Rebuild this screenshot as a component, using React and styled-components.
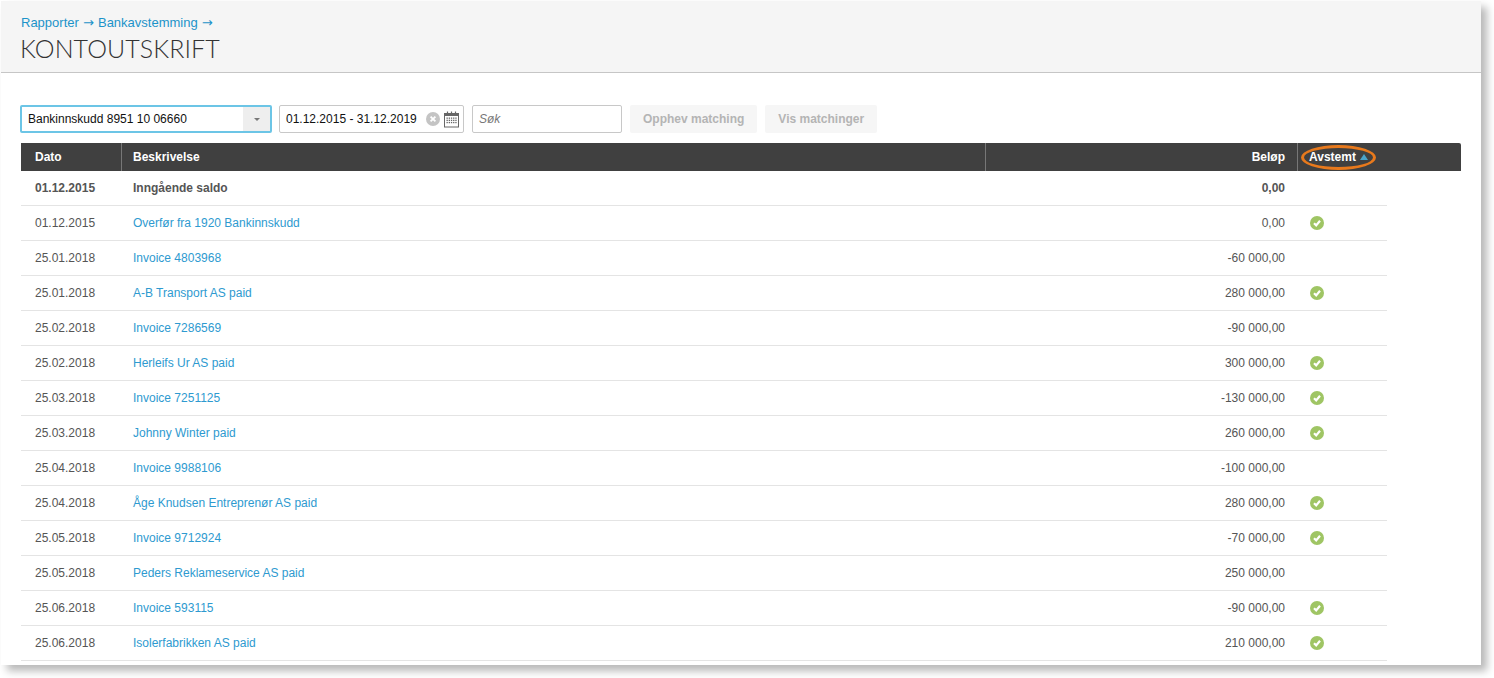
import React from 'react'
import styled, { createGlobalStyle } from 'styled-components'

const Global = createGlobalStyle`
  html, body { margin: 0; padding: 0; background: #fff; }
  body { font-family: "Liberation Sans", Arial, sans-serif; font-size: 12px; color: #555; }
`

const rows = [
  ['01.12.2015', 'Overfør fra 1920 Bankinnskudd', '0,00', true],
  ['25.01.2018', 'Invoice 4803968', '-60 000,00', false],
  ['25.01.2018', 'A-B Transport AS paid', '280 000,00', true],
  ['25.02.2018', 'Invoice 7286569', '-90 000,00', false],
  ['25.02.2018', 'Herleifs Ur AS paid', '300 000,00', true],
  ['25.03.2018', 'Invoice 7251125', '-130 000,00', true],
  ['25.03.2018', 'Johnny Winter paid', '260 000,00', true],
  ['25.04.2018', 'Invoice 9988106', '-100 000,00', false],
  ['25.04.2018', 'Åge Knudsen Entreprenør AS paid', '280 000,00', true],
  ['25.05.2018', 'Invoice 9712924', '-70 000,00', true],
  ['25.05.2018', 'Peders Reklameservice AS paid', '250 000,00', false],
  ['25.06.2018', 'Invoice 593115', '-90 000,00', true],
  ['25.06.2018', 'Isolerfabrikken AS paid', '210 000,00', true],
]

export default function App() {
  return (
    <Stage>
      <Global />
      <Frame>
        <Header>
          <Crumbs>
            <a>Rapporter</a> <Arrow>→</Arrow> <a>Bankavstemming</a> <Arrow>→</Arrow>
          </Crumbs>
          <Title>Kontoutskrift</Title>
        </Header>
        <Content>
          <Toolbar>
            <Select>
              <span>Bankinnskudd 8951 10 06660</span>
              <Caret><i /></Caret>
            </Select>
            <DateField>
              <span>01.12.2015 - 31.12.2019</span>
              <ClearIcon />
              <CalendarIcon />
            </DateField>
            <Search>Søk</Search>
            <Button>Opphev matching</Button>
            <Button>Vis matchinger</Button>
          </Toolbar>
          <HeadRow>
            <HeadCell>Dato</HeadCell>
            <HeadCell>Beskrivelse</HeadCell>
            <HeadCell $right>Beløp</HeadCell>
            <HeadCell>
              Avstemt <SortUp />
              <Ring />
            </HeadCell>
          </HeadRow>
          <Rows>
            <Row>
              <Strong>01.12.2015</Strong>
              <Strong>Inngående saldo</Strong>
              <Amount $bold>0,00</Amount>
              <span />
            </Row>
            {rows.map(([date, text, amount, ok], i) => (
              <Row key={i}>
                <span>{date}</span>
                <Link>{text}</Link>
                <Amount>{amount}</Amount>
                <span>{ok && <Check />}</span>
              </Row>
            ))}
          </Rows>
        </Content>
      </Frame>
    </Stage>
  )
}

function ClearIcon() {
  return (
    <svg width="14" height="14" viewBox="0 0 14 14">
      <circle cx="7" cy="7" r="7" fill="#c4c4c4" />
      <path d="M4.6 4.6l4.8 4.8M9.4 4.6l-4.8 4.8" stroke="#fff" strokeWidth="1.8" />
    </svg>
  )
}

function CalendarIcon() {
  const cells = []
  for (let y = 0; y < 3; y++) {
    for (let x = 0; x < 5; x++) {
      cells.push(<rect key={x + '-' + y} x={2.5 + x * 2.2} y={6.5 + y * 2.2} width="1.3" height="1.3" fill="#666" />)
    }
  }
  return (
    <svg width="16" height="17" viewBox="0 0 16 17">
      <rect x="0.5" y="2.5" width="14" height="13.5" fill="#fff" stroke="#666" />
      <rect x="0.5" y="2.5" width="14" height="2.5" fill="#666" />
      <path d="M3.5 0.5v3M7.5 0.5v3M11.5 0.5v3" stroke="#666" strokeWidth="1.2" />
      {cells}
    </svg>
  )
}

function Check() {
  return (
    <svg width="14" height="14" viewBox="0 0 14 14" style={{ display: 'block' }}>
      <circle cx="7" cy="7" r="7" fill="#9fc564" />
      <path d="M4 7.2l2.2 2.2 3.8-4.6" fill="none" stroke="#fff" strokeWidth="2.2" />
    </svg>
  )
}

const Stage = styled.div`
  width: 1494px;
  height: 678px;
  padding: 1px 0 0 1px;
  box-sizing: border-box;
  overflow: hidden;
`

const Frame = styled.div`
  width: 1480px;
  height: 664px;
  background: #fff;
  overflow: hidden;
  box-shadow: 6px 6px 8px rgba(0, 0, 0, 0.28);
`

const Header = styled.header`
  height: 72px;
  box-sizing: border-box;
  background: #f5f5f5;
  border-bottom: 1px solid #c6c6c6;
  padding: 13px 0 0 19px;
`

const Crumbs = styled.div`
  font-size: 13px;
  line-height: 17px;
  padding-left: 1px;
  color: #1c93c9;
  a { color: #1c93c9; }
`

const Arrow = styled.span`
  font-family: "DejaVu Sans", sans-serif;
  margin: 0 0.5px;
`

const Title = styled.h1`
  margin: 2px 0 0;
  font-family: Lato, sans-serif;
  font-weight: 300;
  font-size: 25px;
  line-height: 30px;
  letter-spacing: 0.1px;
  text-transform: uppercase;
  color: #333;
`

const Content = styled.main`
  padding: 32px 20px 0 20px;
`

const Toolbar = styled.div`
  display: flex;
  gap: 8px;
  height: 28px;
  margin-bottom: 10px;
`

const Select = styled.div`
  width: 252px;
  margin: 0 -1px;
  box-sizing: border-box;
  border: 2px solid #6cc5e6;
  border-radius: 2px;
  display: flex;
  align-items: center;
  justify-content: space-between;
  padding-left: 6px;
  color: #111;
`

const Caret = styled.div`
  width: 27px;
  align-self: stretch;
  background: #eee;
  display: flex;
  align-items: center;
  justify-content: center;
  i {
    border-left: 3px solid transparent;
    border-right: 3px solid transparent;
    border-top: 3px solid #777;
  }
`

const DateField = styled.div`
  width: 185px;
  box-sizing: border-box;
  border: 1px solid #c8c8c8;
  border-radius: 2px;
  display: flex;
  align-items: center;
  padding-left: 6px;
  color: #111;
  span { margin-right: 9px; }
  svg + svg { margin-left: 4px; }
`

const Search = styled.div`
  width: 150px;
  box-sizing: border-box;
  border: 1px solid #c8c8c8;
  border-radius: 2px;
  display: flex;
  align-items: center;
  padding-left: 6px;
  font-style: italic;
  color: #777;
`

const Button = styled.div`
  background: #f6f6f6;
  border-radius: 2px;
  color: #b4b4b4;
  font-weight: bold;
  display: flex;
  align-items: center;
  padding: 0 13px;
`

const HeadRow = styled.div`
  width: 1440px;
  height: 28px;
  background: #404040;
  border-top-right-radius: 2px;
  display: grid;
  grid-template-columns: 100px 864px 312px 164px;
`

const HeadCell = styled.div`
  position: relative;
  box-sizing: border-box;
  display: flex;
  align-items: center;
  justify-content: ${p => (p.$right ? 'flex-end' : 'flex-start')};
  gap: 4px;
  padding: 0 12px 0 11px;
  color: #fff;
  font-weight: bold;
  &:first-child { padding-left: 14px; }
  & + & { border-left: 1px solid #777; }
`

const SortUp = styled.i`
  border-left: 4px solid transparent;
  border-right: 4px solid transparent;
  border-bottom: 6px solid #4aa3c9;
`

const Ring = styled.span`
  position: absolute;
  left: 3px;
  top: 2px;
  width: 75px;
  height: 25px;
  box-sizing: border-box;
  border: 3px solid #e8791c;
  border-radius: 50%;
`

const Rows = styled.div`
  width: 1366px;
`

const Row = styled.div`
  height: 35px;
  box-sizing: border-box;
  border-bottom: 1px solid #e4e4e4;
  display: grid;
  grid-template-columns: 100px 864px 300px 102px;
  align-items: center;
  > :first-child { padding-left: 14px; }
  > :nth-child(2) { padding-left: 12px; }
  > :nth-child(4) { padding-left: 25px; }
`

const Strong = styled.b`
  color: #555;
`

const Link = styled.a`
  color: #2e9ad0;
`

const Amount = styled.span`
  text-align: right;
  font-weight: ${p => (p.$bold ? 'bold' : 'normal')};
`
